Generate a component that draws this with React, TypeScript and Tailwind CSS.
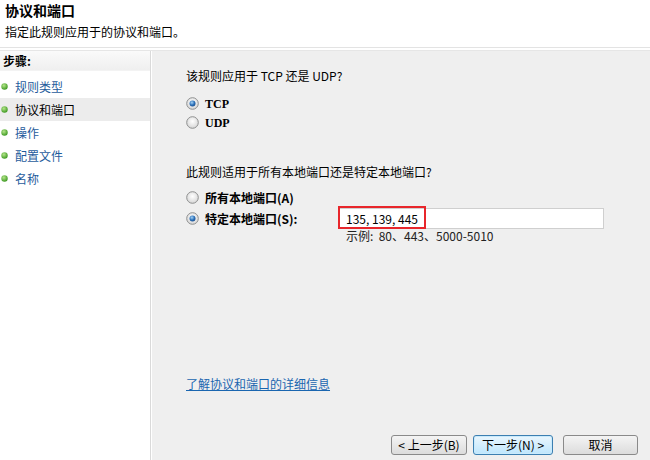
import React from "react";

const font = { fontFamily: '"Noto Sans CJK SC", "SimSun", sans-serif' };

function Radio({ checked }: { checked: boolean }) {
  return (
    <svg width="13" height="13" viewBox="0 0 13 13" className="shrink-0">
      <defs>
        <radialGradient id={checked ? "rgc" : "rgu"} cx="50%" cy="40%" r="60%">
          <stop offset="0%" stopColor="#ffffff" />
          <stop offset="100%" stopColor="#d6d6d6" />
        </radialGradient>
        <radialGradient id="dot" cx="40%" cy="35%" r="70%">
          <stop offset="0%" stopColor="#a6d4f6" />
          <stop offset="60%" stopColor="#2a6fb8" />
          <stop offset="100%" stopColor="#1c4f8c" />
        </radialGradient>
      </defs>
      <circle cx="6.5" cy="6.5" r="5.8" fill={`url(#${checked ? "rgc" : "rgu"})`} stroke="#8e8f8f" strokeWidth="1" />
      {checked && <circle cx="6.5" cy="6.5" r="3" fill="url(#dot)" />}
    </svg>
  );
}

function Bullet() {
  return (
    <svg width="7" height="7" viewBox="0 0 7 7" className="shrink-0">
      <defs>
        <radialGradient id="gb" cx="40%" cy="35%" r="65%">
          <stop offset="0%" stopColor="#b5e68a" />
          <stop offset="100%" stopColor="#3f9a23" />
        </radialGradient>
      </defs>
      <circle cx="3.5" cy="3.5" r="3.2" fill="url(#gb)" />
    </svg>
  );
}

export default function App() {
  const steps = [
    { t: "规则类型", sel: false },
    { t: "协议和端口", sel: true },
    { t: "操作", sel: false },
    { t: "配置文件", sel: false },
    { t: "名称", sel: false },
  ];
  return (
    <div className="w-[650px] h-[460px] overflow-hidden flex flex-col bg-white text-[12px] text-black relative" style={font}>
      {/* header */}
      <div className="h-[48px] shrink-0 bg-white pl-[5px] border-b border-[#e3e3e3]">
        <div className="text-[14px] font-bold leading-[20px]">协议和端口</div>
        <div className="text-[12px] leading-[16px] mt-[4px]">指定此规则应用于的协议和端口。</div>
      </div>
      <div className="h-[3px] shrink-0 bg-white border-b border-[#e6e6e6]" />
      <div className="flex flex-1 min-h-0">
        {/* sidebar */}
        <div className="w-[151px] shrink-0 bg-white border-r border-[#dadada] flex flex-col">
          <div className="h-[20px] flex items-center pl-[3px] font-bold bg-gradient-to-b from-[#fafafa] to-[#efefef] border-b border-[#f3f3f3]">
            步骤:
          </div>
          <div className="flex flex-col pt-[4px]">
            {steps.map((s) => (
              <div
                key={s.t}
                className={`h-[23px] flex items-center gap-[7px] pl-[1px] ${s.sel ? "bg-[#ececec] text-black" : "text-[#1f5c9c]"}`}
              >
                <Bullet />
                <span>{s.t}</span>
              </div>
            ))}
          </div>
        </div>
        <div className="w-[1px] bg-white shrink-0" />
        {/* content */}
        <div className="flex-1 bg-[#efefef] flex flex-col pl-[34px] pr-[12px]">
          <div className="leading-[16px] mt-[17px]">该规则应用于 TCP 还是 UDP?</div>
          <div className="flex flex-col mt-[10px]">
            <div className="h-[19px] flex items-center gap-[6px]">
              <Radio checked />
              <span className="font-bold" style={{ fontFamily: '"Liberation Serif", serif' }}>TCP</span>
            </div>
            <div className="h-[19px] flex items-center gap-[6px]">
              <Radio checked={false} />
              <span className="font-bold" style={{ fontFamily: '"Liberation Serif", serif' }}>UDP</span>
            </div>
          </div>
          <div className="leading-[16px] mt-[32px]">此规则适用于所有本地端口还是特定本地端口?</div>
          <div className="flex flex-col mt-[8px]">
            <div className="h-[19px] flex items-center gap-[6px]">
              <Radio checked={false} />
              <span className="font-bold">所有本地端口(A)</span>
            </div>
            <div className="h-[21px] flex items-center mt-[1px]">
              <div className="w-[152px] flex items-center gap-[6px] shrink-0">
                <Radio checked />
                <span className="font-bold">特定本地端口(S):</span>
              </div>
              <div className="relative w-[266px] h-[21px] bg-white border border-[#cfcfcf] flex items-center pl-[7px] text-[12px]">
                135, 139, 445
                <div className="absolute left-[-1px] top-[-3px] w-[88px] h-[23px] border-2 border-[#e8262b]" />
              </div>
            </div>
            <div className="ml-[160px] leading-[14px] text-[#222]">示例:&nbsp; 80、443、5000-5010</div>
          </div>
          <div className="mt-[133px] leading-[16px]">
            <span className="text-[#1a66b0] underline">了解协议和端口的详细信息</span>
          </div>
          <div className="flex justify-end mt-[43px] gap-[6px]">
            <button className="w-[76px] h-[20px] rounded-[3px] border border-[#8a8a8a] bg-gradient-to-b from-[#f4f4f4] to-[#dcdcdc] text-[12px] leading-none flex items-center justify-center">
              &lt; 上一步(B)
            </button>
            <button className="w-[80px] h-[20px] rounded-[3px] border border-[#3c7fb1] bg-gradient-to-b from-[#eaf6fd] to-[#bee6fd] text-[12px] leading-none flex items-center justify-center shadow-[inset_0_0_0_1px_#c9eafc]">
              下一步(N) &gt;
            </button>
            <button className="ml-[4px] w-[75px] h-[20px] rounded-[3px] border border-[#8a8a8a] bg-gradient-to-b from-[#f4f4f4] to-[#dcdcdc] text-[12px] leading-none flex items-center justify-center">
              取消
            </button>
          </div>
        </div>
      </div>
    </div>
  );
}
